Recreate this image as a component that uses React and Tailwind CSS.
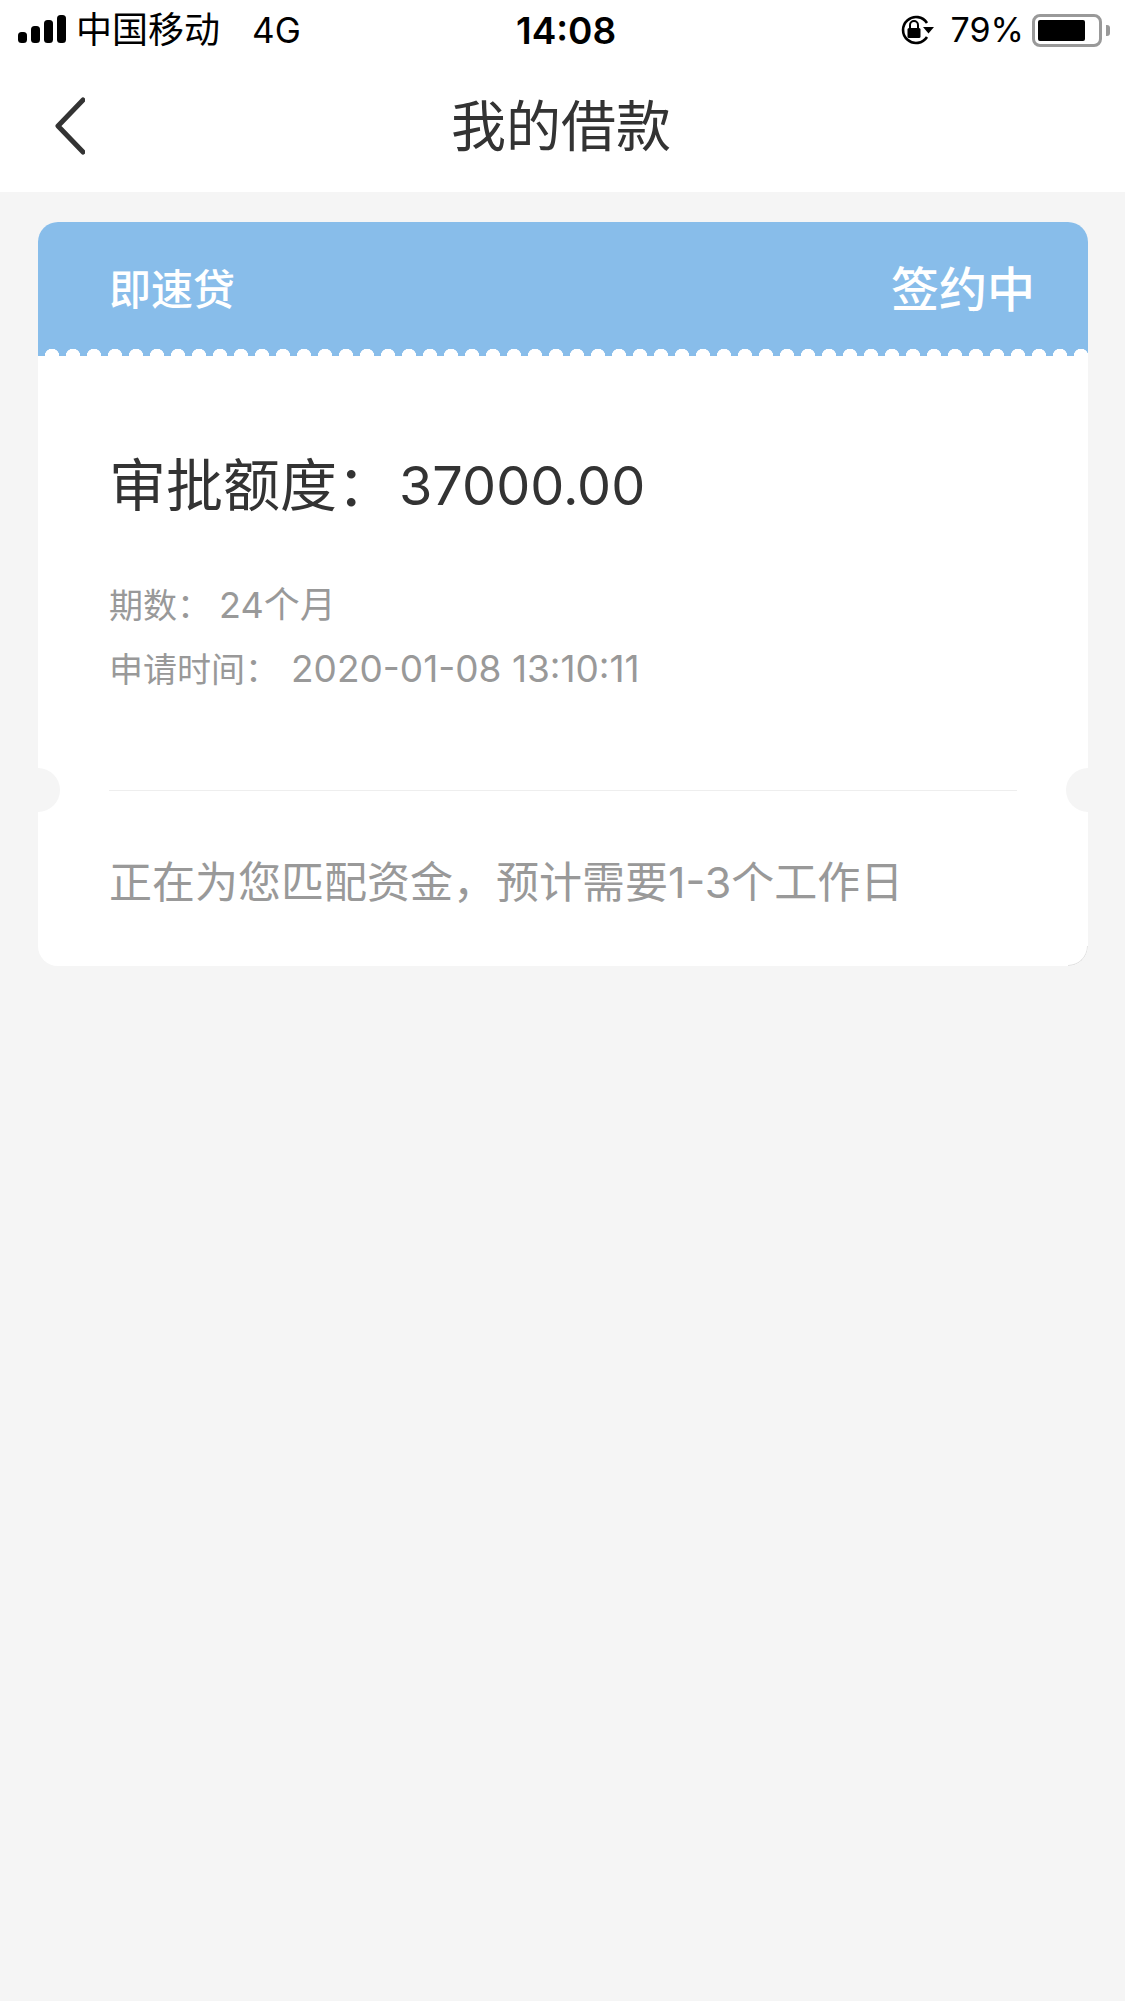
const FONT = "font-['Inter','Noto_Sans_CJK_SC',sans-serif]";

function StatusBar() {
  return (
    <div className="h-[60px] relative flex items-center justify-between pl-[18px] pr-[15px] text-black">
      <div className="flex items-center">
        <svg width="48" height="30" viewBox="0 0 48 30" fill="currentColor">
          <rect x="0" y="17" width="9" height="11" rx="3.5" />
          <rect x="13" y="11" width="9" height="17" rx="3.5" />
          <rect x="26" y="5" width="9" height="23" rx="3.5" />
          <rect x="39" y="0" width="9" height="28" rx="3.5" />
        </svg>
        <span className="ml-[10px] text-[36px] leading-none">中国移动</span>
        <span className="ml-[32px] text-[35px] leading-none">4G</span>
      </div>
      <span className="absolute left-[516px] text-[37px] leading-none font-semibold">14:08</span>
      <div className="flex items-center">
        <svg width="36" height="30" viewBox="0 0 36 30" fill="none">
          <path d="M28 22a13 13 0 1 1 0-14" stroke="black" strokeWidth="2.6" />
          <path d="M24 12h11l-5.5 6.5z" fill="black" />
          <rect x="8.5" y="13" width="13" height="10" rx="1.5" fill="black" />
          <path d="M11 13v-3a4 4 0 0 1 8 0v3" stroke="black" strokeWidth="2" />
        </svg>
        <span className="ml-[16px] text-[34px] leading-none">79%</span>
        <div className="ml-[8px] w-[70px] h-[33px] border-[3px] border-[#999] rounded-[8px] p-[3px]">
          <div className="w-[47px] h-full bg-black rounded-[2px]" />
        </div>
        <div className="ml-[4px] w-[4px] h-[11px] bg-[#999] rounded-r-[3px]" />
      </div>
    </div>
  );
}

function NavBar() {
  return (
    <div className="h-[132px] relative flex items-center justify-center pr-[3px]">
      <svg className="absolute left-[55px] top-[37px]" width="30" height="60" viewBox="0 0 30 60" fill="none">
        <path d="M28 3L3 29l25 26" stroke="#333" strokeWidth="5" strokeLinecap="round" strokeLinejoin="round" />
      </svg>
      <h1 className="text-[55px] leading-none font-normal text-[#333]">我的借款</h1>
    </div>
  );
}

export default function App() {
  return (
    <div className={`min-h-[2001px] bg-[#f5f5f5] ${FONT}`}>
      <div className="bg-white">
        <StatusBar />
        <NavBar />
      </div>

      <div className="relative ml-[38px] mt-[30px] w-[1050px] h-[744px] bg-white rounded-[20px] overflow-hidden">
        <div className="relative h-[134px] bg-[#88bdea] flex items-center justify-between pl-[71px] pr-[53px] pt-[2px] text-white font-medium">
          <span className="text-[42px] leading-none">即速贷</span>
          <span className="text-[48px] leading-none">签约中</span>
          <div className="absolute left-0 right-0 bottom-0 h-[7px] bg-[radial-gradient(circle_at_14px_7px,#fff_7px,transparent_7.5px)] bg-[length:21px_7px]" />
        </div>

        <div className="pl-[71px] pr-[71px]">
          <p className="mt-[101px] flex items-center text-[57px] leading-none text-[#333]">
            审批额度：<span className="ml-[5px] text-[54px]">37000.00</span>
          </p>
          <p className="mt-[73px] text-[34px] leading-none text-[#999]">
            期数：<span className="ml-[8px] text-[36px]">24个月</span>
          </p>
          <p className="mt-[27px] text-[34px] leading-none text-[#999]">
            申请时间：<span className="ml-[12px] text-[37px]">2020-01-08 13:10:11</span>
          </p>
          <div className="mt-[103px] h-[1px] bg-[#eeeeee]" />
          <p className="mt-[70px] text-[43px] leading-none text-[#999]">正在为您匹配资金，预计需要1-3个工作日</p>
        </div>

        <div className="absolute left-[-22px] top-[546px] w-[44px] h-[44px] rounded-full bg-[#f5f5f5]" />
        <div className="absolute right-[-22px] top-[546px] w-[44px] h-[44px] rounded-full bg-[#f5f5f5]" />
        <div className="absolute right-0 bottom-0 w-[20px] h-[20px] rounded-br-[20px] border-r border-b border-[#e2e2e2]" />
      </div>
    </div>
  );
}
